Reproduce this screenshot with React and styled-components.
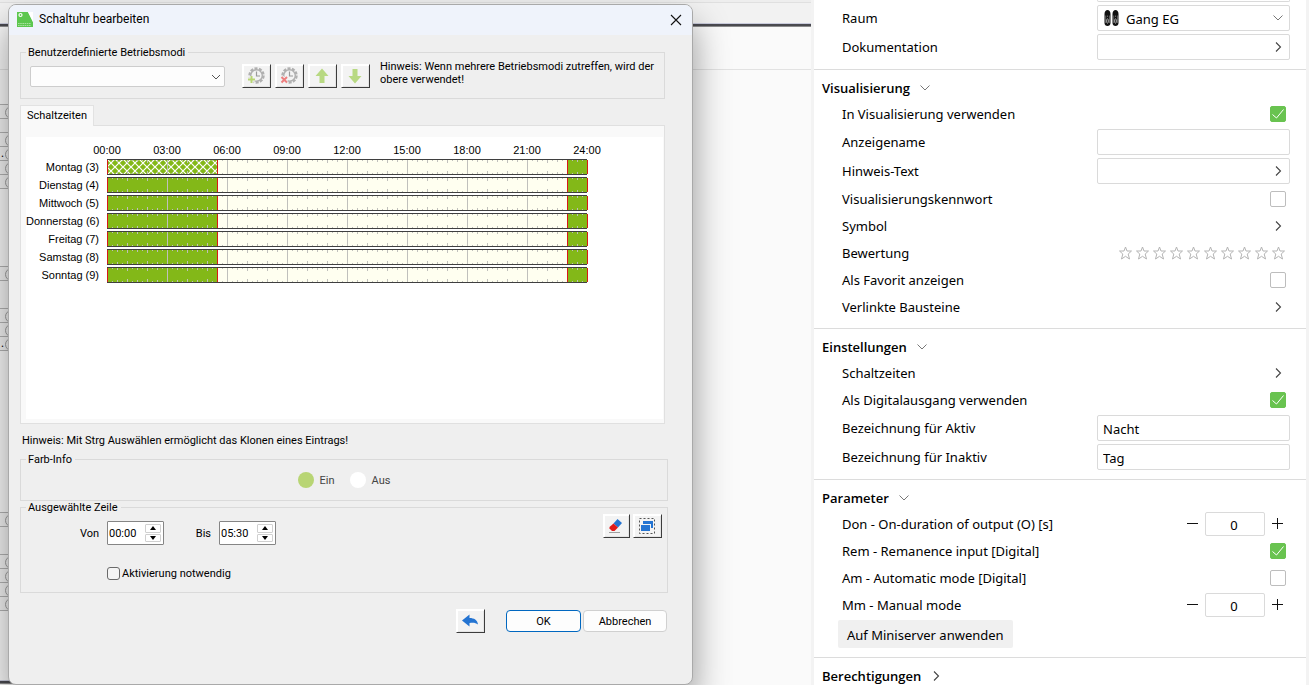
import { useState } from "react";
import styled, { createGlobalStyle, css } from "styled-components";

const GlobalStyle = createGlobalStyle`
  * {
    box-sizing: border-box;
  }

  body {
    margin: 0;
    overflow: hidden;
    color: #000;
    font-family: "Noto Sans", "Open Sans", sans-serif;
    font-size: 13px;
  }

  button, input, select {
    margin: 0;
    padding: 0;
    border: 0;
    outline: 0;
    border-radius: 0;
    background: none;
    color: inherit;
    font: inherit;
    appearance: none;
  }
`;

const Page = styled.div`
  display: grid;
  grid-template-columns: minmax(0, 1fr) 498px;
  height: 100vh;
  overflow: hidden;
`;

/* ---------- canvas behind the dialog ---------- */

const Canvas = styled.main`
  position: relative;
  overflow: hidden;
  background: #fafafa;
`;

const Ruler = styled.div`
  height: 23px;
  background: linear-gradient(#eeeeee 2px, #e0e0e0 2px 3px, #f2f2f2 3px);
`;

const SheetEdge = styled.div`
  height: 4px;
  border-top: 1px solid #c9cbdc;
  border-bottom: 1px solid #8c8c8c;
  background: #4a4a50;
`;

const SheetHead = styled.div`
  height: 43px;
  border-bottom: 1px solid #e2e2e2;
`;

const Blocks = styled.div`
  display: flex;
  flex-direction: column;
  width: 20px;
  padding-top: 34px;
`;

const Block = styled.div`
  margin-bottom: ${({ $gap }) => $gap}px;
  border-top: 1px solid #b4b4b4;
  background: #f4f4f4;
`;

const Port = styled.div`
  position: relative;
  height: ${({ $size }) => $size}px;
  padding-left: 1px;
  border-bottom: 1px solid #b4b4b4;
  font-size: 11px;
  line-height: 12px;

  ${({ $plug }) => $plug && css`
    &::after {
      content: "";
      position: absolute;
      left: 5px;
      top: 1px;
      width: 11px;
      height: 11px;
      border: 1px solid #a2a2a2;
      border-radius: 50%;
    }
  `}
`;

/* ---------- dialog ---------- */

const Dialog = styled.section`
  position: absolute;
  top: 4px;
  left: 8px;
  right: 118px;
  border: 1px solid #a9a9a9;
  border-radius: 8px;
  background: #efefef;
  box-shadow: 0 20px 36px rgba(0, 0, 0, 0.42);
  font-family: Roboto, "Liberation Sans", sans-serif;
  font-size: 11px;
  line-height: 13px;
`;

const TitleBar = styled.header`
  display: flex;
  align-items: center;
  gap: 6px;
  height: 30px;
  padding: 0 9px 1px 7px;
  border-radius: 7px 7px 0 0;
  background: #eff3fb;
`;

const Title = styled.h1`
  flex: 1;
  margin: 0;
  font-size: 12px;
  font-weight: 400;
`;

const CloseButton = styled.button`
  display: flex;
  padding: 1px;
`;

const DialogBody = styled.div`
  padding: 11px 24px 51px 11px;
`;

const Group = styled.fieldset`
  min-width: 0;
  margin: 0;
  padding: 0;
  border: 1px solid #dadada;
`;

const Legend = styled.legend`
  margin-left: 5px;
  padding: 0 3px 0 2px;
`;

const ModesGroup = styled(Group)`
  margin-right: 3px;
`;

const Modes = styled.div`
  display: flex;
  align-items: flex-start;
  gap: 10px;
  padding: 1px 9px 10px;
`;

const ModeTools = styled.div`
  display: flex;
  align-items: center;
  gap: 4px;
  margin-top: 4px;
`;

const Combo = styled.div`
  position: relative;
  width: 195px;
  margin-right: 13px;

  select {
    display: block;
    width: 100%;
    height: 21px;
    border: 1px solid #cdcdcd;
    border-radius: 2px;
    background: #fdfdfd;
  }

  svg {
    position: absolute;
    right: 4px;
    top: 6px;
    pointer-events: none;
  }
`;

const ToolButton = styled.button`
  display: flex;
  align-items: center;
  justify-content: center;
  width: ${({ $narrow }) => ($narrow ? 27 : 29)}px;
  height: 24px;
  padding: 0 2px 0 0;
  border: solid;
  border-width: 1px;
  border-color: #fff #3c3c3c #3c3c3c #fff;
  background: #f3f3f3;
  box-shadow: inset 1px 1px #fff, inset -1px -1px #e4e4e4;
`;

const Hint = styled.p`
  margin: 0;
`;

const Tab = styled.button`
  display: block;
  position: relative;
  height: 21px;
  margin: 6px 0 -1px;
  padding: 0 6px 1px;
  border: 1px solid #e2e2e2;
  border-bottom: 0;
  background: #f9f9f9;
`;

const TabPanel = styled.div`
  margin-right: 3px;
  padding: 11px 1px 4px 5px;
  border: 1px solid #e0e0e0;
  background: #f9f9f9;
`;

const Schedule = styled.div`
  height: 282px;
  padding-top: 7px;
  background: #fff;
  font-family: "Liberation Sans", Arial, sans-serif;
`;

const Hours = styled.div`
  display: grid;
  grid-template-columns: repeat(9, 60px);
  height: 15px;
  margin-left: 51px;
  text-align: center;
`;

const Day = styled.div`
  display: grid;
  grid-template-columns: 73px 481px;
  gap: 8px;
  align-items: center;
  height: 16px;
  margin-bottom: 2px;
  text-align: right;
  white-space: nowrap;

  svg {
    display: block;
  }
`;

const CloneHint = styled(Hint)`
  padding: 10px 2px 6px;
`;

const ColorInfo = styled.div`
  display: flex;
  justify-content: center;
  gap: 15px;
  padding: 6px 0 12px;
  color: #444;
`;

const Swatch = styled.span`
  display: flex;
  align-items: center;
  gap: 6px;

  &::before {
    content: "";
    width: 16px;
    height: 16px;
    border-radius: 50%;
    background: ${({ $color }) => $color};
  }
`;

const Selection = styled.div`
  display: flex;
  justify-content: space-between;
  padding: 0 5px 12px 0;
`;

const Times = styled.div`
  display: grid;
  grid-template-columns: 78px 57px 39px 57px;
  column-gap: 8px;
  row-gap: 21px;
  align-items: center;
  padding-top: 7px;

  > label:not(:last-child) {
    text-align: right;
  }
`;

const TimeSpinner = styled.div`
  display: grid;
  grid-template-columns: 1fr 16px;
  height: 24px;
  padding: 2px 2px 2px 1px;
  border: 1px solid #858585;
  border-radius: 1px;
  background: #fff;

  input {
    width: 100%;
  }

  div {
    display: grid;
    gap: 1px;
  }

  button {
    display: flex;
    align-items: center;
    justify-content: center;
    border: 1px solid #d0d0d0;
    border-radius: 1px;
  }
`;

const Activation = styled.label`
  grid-column: 2 / -1;
  display: flex;
  align-items: center;
  gap: 2px;
  height: 14px;

  input {
    width: 13px;
    height: 13px;
    border: 1px solid #6a6a6a;
    border-radius: 3px;
    background: #f5f5f5;
  }
`;

const RowTools = styled.div`
  display: flex;
  align-items: flex-start;
  gap: 3px;
`;

const Footer = styled.footer`
  display: flex;
  align-items: center;
  justify-content: flex-end;
  gap: 2px;
  padding: 16px 1px 0 0;
`;

const UndoButton = styled(ToolButton)`
  margin-right: 19px;
`;

const PushButton = styled.button`
  width: ${({ $primary }) => ($primary ? 75 : 84)}px;
  height: 22px;
  border: 1px solid ${({ $primary }) => ($primary ? "#0067c0" : "#d0d0d0")};
  border-radius: 4px;
  background: #fdfdfd;
`;

/* ---------- property panel ---------- */

const Panel = styled.aside`
  overflow: hidden;
  border: solid #f3f3f3;
  border-width: 0 3px;
  background: #fff;
`;

const Section = styled.section`
  padding: 5px 16px 8px 8px;
  border-top: 1px solid #dcdcdc;
`;

const TopSection = styled.section`
  padding: 0 16px 8px 8px;
`;

const PreviousField = styled.div`
  width: 193px;
  height: 2px;
  margin: 0 0 1px auto;
  border: 1px solid #dadada;
  border-top: 0;
  border-radius: 0 0 2px 2px;
`;

const SectionTitle = styled.h2`
  display: flex;
  align-items: center;
  height: 25px;
  margin: 0;
  font-size: 13px;
  font-weight: 600;
  font-family: "Open Sans", "Noto Sans", sans-serif;

  button {
    display: flex;
    align-items: center;
    gap: 7px;
  }
`;

const Row = styled.div`
  display: flex;
  align-items: center;
  height: ${({ $boxed }) => ($boxed ? 29 : 27)}px;
  padding: 0 ${({ $boxed }) => ($boxed ? 0 : 4)}px 0 20px;

  > label,
  > span:first-child {
    flex: 1;
  }
`;

const Field = styled.div`
  position: relative;
  width: 193px;

  input,
  select {
    display: block;
    width: 100%;
    height: 26px;
    padding: 2px 5px 0;
    border: 1px solid #dadada;
    border-radius: 2px;
    background: #fff;
  }

  select {
    padding-left: 28px;
  }
`;

const FieldIcon = styled.span`
  position: absolute;
  top: 5px;
  left: 7px;
  display: flex;
  pointer-events: none;
`;

const FieldArrow = styled.span`
  position: absolute;
  top: 5px;
  right: 4px;
  display: flex;
  pointer-events: none;
`;

const ArrowButton = styled.button`
  display: flex;
`;

const Toggle = styled.span`
  position: relative;
  display: flex;

  input {
    width: 16px;
    height: 16px;
    border: 1px solid #bdbdbd;
    border-radius: 2px;
  }

  input:checked {
    border-color: #69c350;
    background: #69c350;
  }

  svg {
    position: absolute;
    inset: 0;
    pointer-events: none;
  }
`;

const Stars = styled.div`
  display: flex;
  gap: 4px;
  margin-right: 1px;

  button,
  svg {
    display: block;
  }

  button {
    width: 13px;
    height: 16px;
  }
`;

const Stepper = styled.div`
  display: flex;
  align-items: center;
  gap: 6px;
  margin-right: 2px;

  input {
    width: 60px;
    height: 24px;
    border: 1px solid #dadada;
    border-radius: 2px;
    padding: 2px 2px 0 0;
    text-align: center;
  }

  button {
    display: flex;
  }
`;

const ApplyButton = styled.button`
  display: block;
  height: 28px;
  margin: 2px 0 1px 16px;
  padding: 2px 9px 0;
  border-radius: 2px;
  background: #f0f0f0;
`;

/* ---------- icons ---------- */

const ArrowDown = ({ color = "#777" }) => (
  <svg width="16" height="16" viewBox="0 0 16 16" fill="none" stroke={color}>
    <path d="M3.5 5.5 8 10l4.5-4.5" />
  </svg>
);

const ArrowRight = () => (
  <svg width="16" height="16" viewBox="0 0 16 16" fill="none" stroke="#444" strokeWidth="1.1">
    <path d="M6 3.5 10.5 8 6 12.5" />
  </svg>
);

const ConfigLogo = () => (
  <svg width="17" height="17" viewBox="0 0 17 17">
    <path d="M1 1h11l5 10v5H1z" fill="#5cc74f" />
    <path d="m12 1 5 10V1z" fill="#fff" />
    <circle cx="4.5" cy="4" r="1.5" fill="none" stroke="#fff" strokeWidth="1.2" />
    <path d="M2 12.5h13M2 14.5h13" stroke="#a8e0a0" strokeDasharray="1.6 .6" />
  </svg>
);

const GearClock = ({ children }) => (
  <svg width="18" height="18" viewBox="0 0 18 18" fill="none">
    <circle cx="9.5" cy="8.5" r="7" stroke="#b0b0b0" strokeWidth="2.4" strokeDasharray="3 1.4" />
    <circle cx="9.5" cy="8.5" r="5.8" stroke="#b0b0b0" strokeWidth="1.4" />
    <path d="M9.5 4.5V9H13" stroke="#999" strokeWidth="1.2" />
    {children}
  </svg>
);

const GearAdd = () => (
  <GearClock>
    <path d="M4.5 9v7M1 12.5h7" stroke="#f3f3f3" strokeWidth="4" />
    <path d="M4.5 9v7M1 12.5h7" stroke="#b8d574" strokeWidth="2" />
  </GearClock>
);

const GearRemove = () => (
  <GearClock>
    <path d="m2 10.5 5 5m0-5-5 5" stroke="#f3f3f3" strokeWidth="4" />
    <path d="m1.500 10 5.500 5.500M7 10l-5.500 5.500" stroke="#ee7f7f" strokeWidth="2" />
  </GearClock>
);

const MoveUp = () => (
  <svg width="14" height="16" viewBox="0 0 14 16">
    <path d="M7 .5 13.500 8H9.500v7h-5V8H.5z" fill="#b8d982" />
  </svg>
);

const MoveDown = () => (
  <svg width="14" height="16" viewBox="0 0 14 16">
    <path d="M7 15.500.5 8h4V1h5v7h4z" fill="#b8d982" />
  </svg>
);

const Eraser = () => (
  <svg width="16" height="16" viewBox="0 0 16 16">
    <path d="m9.500 1 4.500 4-4 4.500L5.500 5.500z" fill="#2474d2" />
    <path d="m5.500 5.500 4.500 4L6.500 13H4L1.500 10.500V9z" fill="#e01b1b" />
    <path d="M1 14.500h11" stroke="#a0a0a0" />
  </svg>
);

const SelectAll = () => (
  <svg width="18" height="18" viewBox="0 0 18 18">
    <rect x="1.500" y="1.500" width="15" height="15" fill="none" stroke="#555" strokeDasharray="2 2" />
    <path d="M5 4h10v7h-2V7H5z" fill="#2474d2" />
    <path d="M3 8h9v6H3z" fill="#2474d2" />
  </svg>
);

const Undo = () => (
  <svg width="18" height="16" viewBox="0 0 18 16">
    <path d="M1 7.500 8.500 1.500V5C13 5 16.500 7 17 11.500 14.500 9.500 12 9.500 8.500 10v3.500z" fill="#2474d2" />
  </svg>
);

const Shoes = () => (
  <svg width="16" height="16" viewBox="0 0 16 16">
    {[0, 8].map((x) => (
      <g key={x} transform={`translate(${x} 0)`}>
        <path d="M.5 4C.5 1.500 2 0 3.500 0S6.500 1.500 6.500 4v9c0 2-1.300 3-3 3s-3-1-3-3z" fill="#111" />
        <path d="M1.700 5.500v7.500M5.400 5.500v7.500M3.500 5.500v1.500" fill="none" stroke="#999" strokeWidth=".6" />
        <ellipse cx="3.500" cy="11" rx=".9" ry="2.200" fill="none" stroke="#ddd" strokeWidth=".7" />
      </g>
    ))}
  </svg>
);

const Star = () => (
  <svg width="13" height="14" viewBox="0 0 13 14" fill="none" stroke="#b4b4b4">
    <path d="M6.500 1 8 5h4.500L9.200 8l1.300 5-4-2.700L2.500 13l1.300-5L.5 5H5z" />
  </svg>
);

const Sign = ({ plus }) => (
  <svg width="13" height="13" viewBox="0 0 13 13" stroke="#111" strokeWidth="1">
    <path d={plus ? "M1 6.500h11M6.500 1v11" : "M1 6.500h11"} />
  </svg>
);

/* ---------- schedule ---------- */

const HOUR = 20;
const HOURS = ["00:00", "03:00", "06:00", "09:00", "12:00", "15:00", "18:00", "21:00", "24:00"];
const DAYS = ["Montag (3)", "Dienstag (4)", "Mittwoch (5)", "Donnerstag (6)", "Freitag (7)", "Samstag (8)", "Sonntag (9)"];
const PERIODS = [[0, 5.5], [23, 24]];

const ticks = Array.from({ length: 95 }, (_, i) => i + 1).map((q) => {
  const size = q % 4 === 0 ? 3 : q % 2 === 0 ? 2 : 1;
  const x = q * (HOUR / 4);
  return q % 12 === 0
    ? `M${x} 1h1v14h-1z`
    : `M${x} 1h1v${size}h-1zM${x} ${15 - size}h1v${size}h-1z`;
}).join("");

const Track = ({ selected }) => (
  <svg width="481" height="16" viewBox="0 0 481 16" shapeRendering="crispEdges">
    <defs>
      <pattern id="hatch" width="8" height="8" patternUnits="userSpaceOnUse">
        <rect width="8" height="8" fill="#83b818" />
        <path d="m-1-1 10 10M9-1-1 9" stroke="#fff" shapeRendering="auto" strokeWidth="1.2" />
      </pattern>
    </defs>
    <rect width="480" height="16" fill="#3f3f3f" />
    <rect y="1" width="480" height="14" fill="#fffff0" />
    {PERIODS.map(([from, to]) => (
      <rect
        key={from}
        x={from * HOUR}
        y="1"
        width={(to - from) * HOUR}
        height="14"
        fill={selected && from === 0 ? "url(#hatch)" : "#83b818"}
      />
    ))}
    <path d={ticks} fill="#c0c0bc" />
    {PERIODS.flat().map((hour) => (
      <rect key={hour} x={hour * HOUR} y="1" width="1" height="14" fill="#d81818" />
    ))}
  </svg>
);

/* ---------- dialog parts ---------- */

const Time = ({ id, value }) => {
  const [time, setTime] = useState(value);

  return (
    <TimeSpinner>
      <input id={id} value={time} onChange={(e) => setTime(e.target.value)} />
      <div>
        <button aria-label="Später">
          <svg width="6" height="4" viewBox="0 0 6 4"><path d="M3 0 6 4H0z" /></svg>
        </button>
        <button aria-label="Früher">
          <svg width="6" height="4" viewBox="0 0 6 4"><path d="M3 4 0 0h6z" /></svg>
        </button>
      </div>
    </TimeSpinner>
  );
};

const TimerDialog = () => (
  <Dialog role="dialog" aria-labelledby="dialog-title">
    <TitleBar>
      <ConfigLogo />
      <Title id="dialog-title">Schaltuhr bearbeiten</Title>
      <CloseButton aria-label="Schließen">
        <svg width="12" height="12" viewBox="0 0 12 12" stroke="#111" strokeWidth="1.1">
          <path d="m1 1 10 10M11 1 1 11" />
        </svg>
      </CloseButton>
    </TitleBar>

    <DialogBody>
      <ModesGroup>
        <Legend>Benutzerdefinierte Betriebsmodi</Legend>
        <Modes>
          <ModeTools>
            <Combo>
              <select aria-label="Betriebsmodus" />
              <svg width="10" height="10" viewBox="0 0 10 10" fill="none" stroke="#555">
                <path d="m1 3 4 4 4-4" />
              </svg>
            </Combo>
            <ToolButton aria-label="Hinzufügen"><GearAdd /></ToolButton>
            <ToolButton aria-label="Entfernen"><GearRemove /></ToolButton>
            <ToolButton aria-label="Nach oben"><MoveUp /></ToolButton>
            <ToolButton aria-label="Nach unten"><MoveDown /></ToolButton>
          </ModeTools>
          <Hint>Hinweis: Wenn mehrere Betriebsmodi zutreffen, wird der obere verwendet!</Hint>
        </Modes>
      </ModesGroup>

      <Tab>Schaltzeiten</Tab>
      <TabPanel>
        <Schedule>
          <Hours>
            {HOURS.map((hour) => <span key={hour}>{hour}</span>)}
          </Hours>
          {DAYS.map((day, i) => (
            <Day key={day}>
              <span>{day}</span>
              <Track selected={i === 0} />
            </Day>
          ))}
        </Schedule>
      </TabPanel>

      <CloneHint>Hinweis: Mit Strg Auswählen ermöglicht das Klonen eines Eintrags!</CloneHint>

      <Group>
        <Legend>Farb-Info</Legend>
        <ColorInfo>
          <Swatch $color="#b8d574">Ein</Swatch>
          <Swatch $color="#fff">Aus</Swatch>
        </ColorInfo>
      </Group>

      <Group>
        <Legend>Ausgewählte Zeile</Legend>
        <Selection>
          <Times>
            <label htmlFor="from">Von</label>
            <Time id="from" value="00:00" />
            <label htmlFor="to">Bis</label>
            <Time id="to" value="05:30" />
            <Activation>
              <input type="checkbox" />
              Aktivierung notwendig
            </Activation>
          </Times>
          <RowTools>
            <ToolButton $narrow aria-label="Löschen"><Eraser /></ToolButton>
            <ToolButton aria-label="Alles auswählen"><SelectAll /></ToolButton>
          </RowTools>
        </Selection>
      </Group>

      <Footer>
        <UndoButton aria-label="Rückgängig"><Undo /></UndoButton>
        <PushButton $primary>OK</PushButton>
        <PushButton>Abbrechen</PushButton>
      </Footer>
    </DialogBody>
  </Dialog>
);

/* ---------- panel parts ---------- */

const TextRow = ({ id, label, value = "", arrow }) => {
  const [text, setText] = useState(value);

  return (
    <Row $boxed>
      <label htmlFor={id}>{label}</label>
      <Field>
        <input id={id} value={text} onChange={(e) => setText(e.target.value)} />
        {arrow && <FieldArrow><ArrowRight /></FieldArrow>}
      </Field>
    </Row>
  );
};

const CheckRow = ({ id, label, checked = false }) => {
  const [on, setOn] = useState(checked);

  return (
    <Row>
      <label htmlFor={id}>{label}</label>
      <Toggle>
        <input id={id} type="checkbox" checked={on} onChange={() => setOn(!on)} />
        {on && (
          <svg width="16" height="16" viewBox="0 0 16 16" fill="none" stroke="#fff">
            <path d="m2.500 8.500 4 3.500 7-8.500" />
          </svg>
        )}
      </Toggle>
    </Row>
  );
};

const LinkRow = ({ label }) => (
  <Row>
    <span>{label}</span>
    <ArrowButton aria-label={label}><ArrowRight /></ArrowButton>
  </Row>
);

const NumberRow = ({ id, label }) => {
  const [count, setCount] = useState(0);

  return (
    <Row>
      <label htmlFor={id}>{label}</label>
      <Stepper>
        <button aria-label="Weniger" onClick={() => setCount(count - 1)}><Sign /></button>
        <input id={id} value={count} onChange={(e) => setCount(Number(e.target.value) || 0)} />
        <button aria-label="Mehr" onClick={() => setCount(count + 1)}><Sign plus /></button>
      </Stepper>
    </Row>
  );
};

const Properties = () => (
  <Panel>
    <TopSection>
      <PreviousField />
      <Row $boxed>
        <label htmlFor="room">Raum</label>
        <Field>
          <select id="room">
            <option>Gang EG</option>
          </select>
          <FieldIcon><Shoes /></FieldIcon>
          <FieldArrow><ArrowDown /></FieldArrow>
        </Field>
      </Row>
      <TextRow id="docs" label="Dokumentation" arrow />
    </TopSection>

    <Section>
      <SectionTitle><button>Visualisierung <ArrowDown /></button></SectionTitle>
      <CheckRow id="visu" label="In Visualisierung verwenden" checked />
      <TextRow id="name" label="Anzeigename" />
      <TextRow id="hint" label="Hinweis-Text" arrow />
      <CheckRow id="password" label="Visualisierungskennwort" />
      <LinkRow label="Symbol" />
      <Row>
        <span>Bewertung</span>
        <Stars>
          {Array.from({ length: 10 }, (_, i) => (
            <button key={i} aria-label={`${i + 1}`}><Star /></button>
          ))}
        </Stars>
      </Row>
      <CheckRow id="favorite" label="Als Favorit anzeigen" />
      <LinkRow label="Verlinkte Bausteine" />
    </Section>

    <Section>
      <SectionTitle><button>Einstellungen <ArrowDown /></button></SectionTitle>
      <LinkRow label="Schaltzeiten" />
      <CheckRow id="digital" label="Als Digitalausgang verwenden" checked />
      <TextRow id="active" label="Bezeichnung für Aktiv" value="Nacht" />
      <TextRow id="inactive" label="Bezeichnung für Inaktiv" value="Tag" />
    </Section>

    <Section>
      <SectionTitle><button>Parameter <ArrowDown /></button></SectionTitle>
      <NumberRow id="don" label="Don - On-duration of output (O) [s]" />
      <CheckRow id="rem" label="Rem - Remanence input [Digital]" checked />
      <CheckRow id="am" label="Am - Automatic mode [Digital]" />
      <NumberRow id="mm" label="Mm - Manual mode" />
      <ApplyButton>Auf Miniserver anwenden</ApplyButton>
    </Section>

    <Section>
      <SectionTitle><button>Berechtigungen <ArrowRight /></button></SectionTitle>
    </Section>
  </Panel>
);

const App = () => (
  <>
    <GlobalStyle />
    <Page>
      <Canvas>
        <Ruler />
        <SheetEdge />
        <SheetHead />
        <Blocks>
          <Block $gap={77}>
            <Port $size={14} $plug />
            <Port $size={14} />
            <Port $size={14} $plug />
            <Port $size={14} $plug>.</Port>
            <Port $size={14} $plug />
            <Port $size={14} $plug />
          </Block>
          <Block $gap={161}>
            <Port $size={14} $plug />
            <Port $size={28} />
            <Port $size={14} $plug />
            <Port $size={14} $plug />
            <Port $size={14} $plug>.</Port>
          </Block>
          <Block $gap={69}>
            <Port $size={14} $plug />
            <Port $size={28} />
            <Port $size={14} $plug />
            <Port $size={14} $plug />
            <Port $size={14} $plug />
            <Port $size={14} $plug />
          </Block>
          <SheetEdge />
        </Blocks>
        <TimerDialog />
      </Canvas>
      <Properties />
    </Page>
  </>
);

export default App;
